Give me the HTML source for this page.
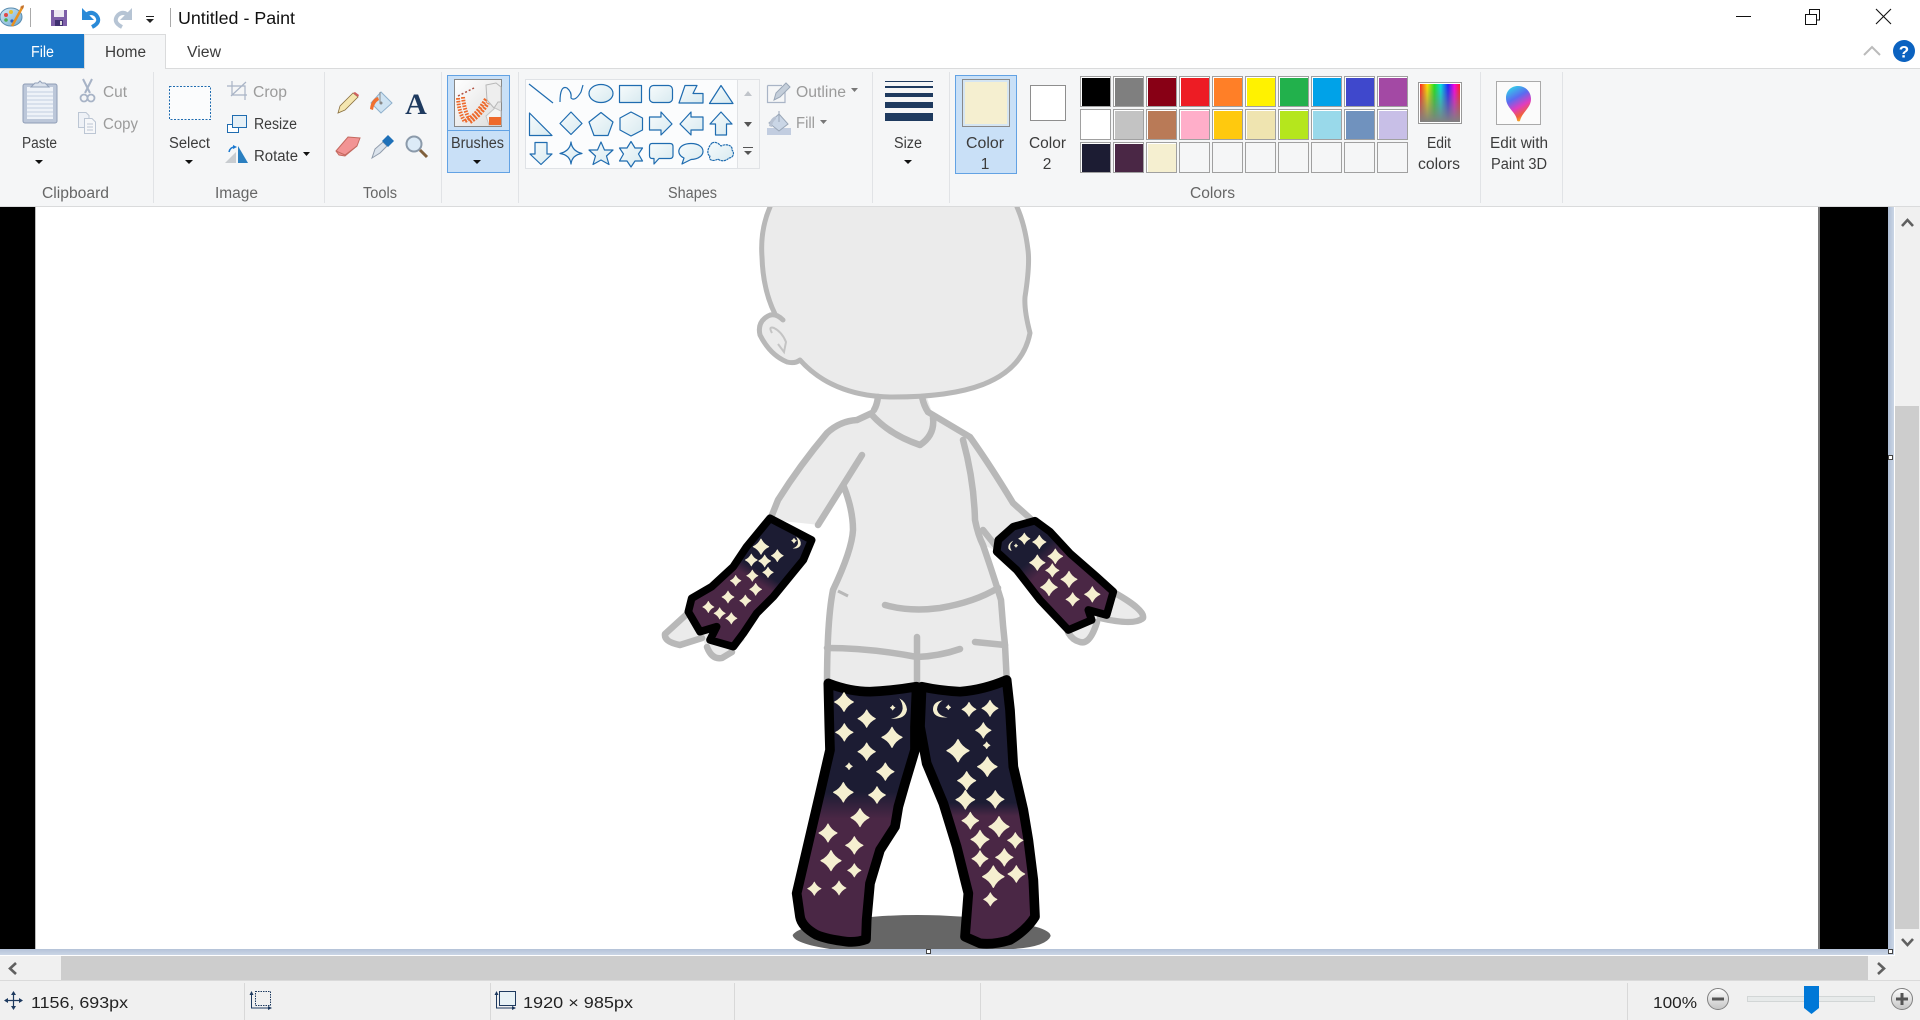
<!DOCTYPE html>
<html><head><meta charset="utf-8"><title>Untitled - Paint</title>
<style>
html,body{margin:0;padding:0;background:#fff;width:1920px;height:1020px;overflow:hidden}
svg{display:block}
text{font-family:"Liberation Sans",sans-serif;font-size:15.5px;fill:#3c3c3c}
.g{fill:#9b9b9b}.l{fill:#666}
</style></head><body>
<svg width="1920" height="1020" viewBox="0 0 1920 1020" xmlns="http://www.w3.org/2000/svg">
<defs>
<path id="s" d="M0-1Q.32-.32 1 0Q.32.32 0 1Q-.32.32-1 0Q-.32-.32 0-1Z" stroke="#f5efd0" stroke-width=".12" stroke-linejoin="round"/>
<linearGradient id="band" x1="0" y1="0" x2="0" y2="1"><stop offset="0" stop-color="#b4c2d8"/><stop offset="1" stop-color="#cbd6e6"/></linearGradient>
<linearGradient id="bandv" x1="0" y1="0" x2="1" y2="0"><stop offset="0" stop-color="#aebdd4"/><stop offset="1" stop-color="#cbd6e6"/></linearGradient>
<linearGradient id="sockL" gradientUnits="userSpaceOnUse" x1="0" y1="60" x2="0" y2="860"><stop offset="0" stop-color="#1c1c33"/><stop offset=".42" stop-color="#1c1c33"/><stop offset=".52" stop-color="#4a2745"/><stop offset="1" stop-color="#4a2745"/></linearGradient>
<linearGradient id="sockR" gradientUnits="userSpaceOnUse" x1="0" y1="60" x2="0" y2="860"><stop offset="0" stop-color="#1c1c33"/><stop offset=".46" stop-color="#1c1c33"/><stop offset=".51" stop-color="#4a2745"/><stop offset="1" stop-color="#4a2745"/></linearGradient>
<linearGradient id="gloveL" gradientUnits="userSpaceOnUse" x1="440" y1="130" x2="270" y2="410"><stop offset="0" stop-color="#1c1c33"/><stop offset=".42" stop-color="#1c1c33"/><stop offset=".52" stop-color="#4a2745"/><stop offset="1" stop-color="#4a2745"/></linearGradient>
<linearGradient id="gloveR" gradientUnits="userSpaceOnUse" x1="1110" y1="130" x2="1350" y2="390"><stop offset="0" stop-color="#1c1c33"/><stop offset=".28" stop-color="#1c1c33"/><stop offset=".42" stop-color="#4a2745"/><stop offset="1" stop-color="#4a2745"/></linearGradient>
<linearGradient id="sh" x1="0" y1="0" x2="1" y2="1"><stop offset="0" stop-color="#f7fbfc"/><stop offset="1" stop-color="#d8eaf0"/></linearGradient>
<linearGradient id="rb" x1="0" y1="0" x2="1" y2="0"><stop offset="0" stop-color="#ff2020"/><stop offset=".18" stop-color="#ffe000"/><stop offset=".36" stop-color="#20e020"/><stop offset=".52" stop-color="#00e0e0"/><stop offset=".7" stop-color="#2020ff"/><stop offset=".86" stop-color="#ff00e0"/><stop offset="1" stop-color="#ff2020"/></linearGradient>
<linearGradient id="rbv" x1="0" y1="0" x2="0" y2="1"><stop offset="0" stop-color="#808080" stop-opacity="0"/><stop offset="1" stop-color="#808080"/></linearGradient>
<linearGradient id="drop" x1=".2" y1="0" x2=".6" y2="1"><stop offset="0" stop-color="#2fd6e8"/><stop offset=".35" stop-color="#5a6cf0"/><stop offset=".62" stop-color="#e03cc0"/><stop offset=".85" stop-color="#f0603c"/><stop offset="1" stop-color="#f8c020"/></linearGradient>
<linearGradient id="btn" x1="0" y1="0" x2="0" y2="1"><stop offset="0" stop-color="#fff"/><stop offset="1" stop-color="#c4c4c4"/></linearGradient>
<linearGradient id="pal" x1="0" y1="0" x2="1" y2="1"><stop offset="0" stop-color="#d8ecf8"/><stop offset="1" stop-color="#6aa6cf"/></linearGradient>
<linearGradient id="bi" x1="0" y1="0" x2="1" y2="1"><stop offset="0" stop-color="#fff"/><stop offset="1" stop-color="#dcdcdc"/></linearGradient>
</defs>

<!-- workspace -->
<rect x="0" y="207" width="1920" height="813" fill="#f0f0f0"/>
<rect x="0" y="207" width="35" height="742" fill="#000"/>
<rect x="35" y="207" width="1" height="742" fill="#bbb"/>
<rect x="36" y="207" width="1782" height="742" fill="#fff"/>
<rect x="1818" y="207" width="2" height="742" fill="#777"/>
<rect x="1820" y="207" width="68" height="742" fill="#000"/>
<rect x="1888" y="207" width="6" height="748" fill="url(#bandv)"/>
<rect x="0" y="949" width="1894" height="6" fill="url(#band)"/>
<rect x="1894" y="207" width="1" height="749" fill="#fff"/>
<rect x="0" y="955" width="1895" height="1" fill="#fff"/>

<!-- figure shadow -->
<g transform="translate(780 660) scale(.33333)">
<path d="M285 770Q410 760 545 770Q810 790 812 828Q800 860 700 867L150 867Q40 850 38 825Q60 790 285 770Z" fill="#666"/>
</g>

<!-- hands -->
<path d="M688 613L665 634Q664 642 680 645L702 638Q712 660 722 658L745 640L700 600Z" fill="#ebebeb"/>
<path d="M1115 593Q1145 610 1143 618Q1135 626 1100 618Q1090 645 1080 642Q1072 640 1068 632L1090 590Z" fill="#ebebeb"/>
<!-- arms and torso -->
<path d="M872 413L857 420Q840 421 827 433Q800 465 778 500L772 520L820 525L843 487Q853 510 853 530Q852 550 833 590L827 625V692H1007L1005 645L1003 625L998 590L983 545L995 550L1032 520L1013 503Q990 465 970 437L928 412Z" fill="#ebebeb"/>
<!-- head -->
<path d="M770 207Q760 230 762 257Q763 290 775 314L768 316Q757 322 760 335Q770 355 787 362Q795 364 800 360C825 388 860 397 893 397C960 397 1020 385 1030 333Q1024 310 1025 297Q1030 265 1028 250Q1025 225 1017 207Z" fill="#ebebeb"/>
<path d="M875 395L872 418L920 447L934 418L926 395Z" fill="#ebebeb"/>
<g fill="none" stroke="#b8b8b8" stroke-width="5" stroke-linecap="round" stroke-linejoin="round">
<path d="M770 207Q760 230 762 257Q763 290 775 314M783 320Q775 312 768 316Q757 322 760 335Q770 355 787 362Q795 364 800 360C825 388 860 397 893 397C960 397 1020 385 1030 333Q1024 310 1025 297Q1030 265 1028 250Q1025 225 1017 207"/>
</g>
<g fill="none" stroke="#b8b8b8" stroke-width="6.5" stroke-linecap="round" stroke-linejoin="round">
<path d="M878 397Q877 405 874 410M922 397Q924 406 928 412"/>
<path d="M872 415Q890 435 920 445Q935 435 933 418"/>
<path d="M872 413L857 420Q840 421 827 433Q800 465 778 500L772 515"/>
<path d="M928 412Q950 425 970 437Q990 465 1013 503L1032 520"/>
<path d="M862 455L818 525"/>
<path d="M844 487Q853 510 853 530Q852 550 833 590Q827 620 827 685"/>
<path d="M963 440Q974 480 975 520Q978 535 983 545Q995 580 1001 600L1003 625L1005 645L1007 685"/>
<path d="M983 530L995 545"/>
<path d="M885 605Q910 612 940 608Q975 602 998 588"/>
<path d="M827 648Q870 648 917 657Q940 656 960 649"/>
<path d="M917 637L917 685"/>
<path d="M975 642L1005 645"/>
<path d="M688 613L665 634Q664 642 680 645L702 638"/>
<path d="M707 647Q712 660 722 658L732 652"/>
<path d="M1115 593Q1145 610 1143 618Q1135 626 1100 618"/>
<path d="M1097 622Q1090 645 1080 642Q1072 640 1068 632"/>
</g>
<path d="M838 591L848 596" stroke="#b8b8b8" stroke-width="3" fill="none"/>
<path d="M772 333Q768 326 774 328Q782 332 786 342L784 352L778 344" stroke="#c4c4c4" stroke-width="2" fill="none"/>

<!-- socks -->
<g transform="translate(780 660) scale(.33333)">
<path d="M145 70Q210 95 270 95Q340 92 410 80L405 200L405 270L375 370L355 440L345 500L300 570L270 670L260 780L258 838Q230 848 200 845Q140 838 110 825Q65 800 60 770L50 700L85 550L120 400L150 270L148 200Z" fill="url(#sockL)" stroke="#000" stroke-width="29" stroke-linejoin="round"/>
<path d="M425 80Q480 92 540 95Q610 90 680 60L690 150L700 320L730 450L745 540L760 660L765 770Q740 810 690 840Q640 855 600 850L555 830L565 700L530 560L490 430L440 310L420 200Z" fill="url(#sockR)" stroke="#000" stroke-width="29" stroke-linejoin="round"/>
<g fill="#f5efd0">
<use href="#s" transform="translate(192 126) scale(28)"/><use href="#s" transform="translate(260 176) scale(26)"/><use href="#s" transform="translate(193 217) scale(26)"/><use href="#s" transform="translate(336 232) scale(30)"/><use href="#s" transform="translate(260 275) scale(26)"/><use href="#s" transform="translate(207 319) scale(11)"/><use href="#s" transform="translate(316 335) scale(26)"/><use href="#s" transform="translate(190 397) scale(29)"/><use href="#s" transform="translate(291 405) scale(25)"/><use href="#s" transform="translate(240 473) scale(27)"/><use href="#s" transform="translate(144 519) scale(27)"/><use href="#s" transform="translate(223 556) scale(26)"/><use href="#s" transform="translate(153 602) scale(30)"/><use href="#s" transform="translate(223 631) scale(20)"/><use href="#s" transform="translate(103 686) scale(20)"/><use href="#s" transform="translate(177 684) scale(21)"/><use href="#s" transform="translate(338 143) scale(8)"/>
<use href="#s" transform="translate(567 148) scale(21)"/><use href="#s" transform="translate(630 145) scale(24)"/><use href="#s" transform="translate(610 211) scale(23)"/><use href="#s" transform="translate(620 256) scale(11)"/><use href="#s" transform="translate(534 272) scale(33)"/><use href="#s" transform="translate(622 320) scale(29)"/><use href="#s" transform="translate(560 362) scale(27)"/><use href="#s" transform="translate(556 419) scale(28)"/><use href="#s" transform="translate(646 418) scale(26)"/><use href="#s" transform="translate(571 482) scale(25)"/><use href="#s" transform="translate(657 500) scale(30)"/><use href="#s" transform="translate(600 538) scale(27)"/><use href="#s" transform="translate(706 541) scale(23)"/><use href="#s" transform="translate(600 596) scale(24)"/><use href="#s" transform="translate(673 592) scale(26)"/><use href="#s" transform="translate(640 650) scale(32)"/><use href="#s" transform="translate(709 642) scale(25)"/><use href="#s" transform="translate(631 718) scale(20)"/><use href="#s" transform="translate(505 142) scale(8)"/>
<path d="M358 115Q378 125 381 148Q378 178 333 176Q365 170 368 145Q368 128 358 115Z"/>
<path d="M488 121Q458 125 459 150Q462 175 503 172Q475 168 471 148Q472 130 488 121Z"/>
</g>
</g>

<!-- gloves -->
<g transform="translate(640 490) scale(.33333)">
<path d="M390 85L515 150L490 210L445 265L400 320L350 370L310 430L280 470L210 450L230 410L180 425L145 365L155 325L215 290L280 230L320 170Z" fill="url(#gloveL)" stroke="#000" stroke-width="23" stroke-linejoin="round"/>
<path d="M1185 92L1230 125L1290 190L1370 260L1420 305L1400 375L1345 360L1355 390L1285 420L1200 330L1130 240L1070 185L1075 150L1120 110Z" fill="url(#gloveR)" stroke="#000" stroke-width="23" stroke-linejoin="round"/>
<g fill="#f5efd0">
<use href="#s" transform="translate(363 170) scale(23)"/><use href="#s" transform="translate(412 197) scale(18)"/><use href="#s" transform="translate(334 210) scale(18)"/><use href="#s" transform="translate(374 213) scale(18)"/><use href="#s" transform="translate(384 247) scale(16)"/><use href="#s" transform="translate(337 257) scale(17)"/><use href="#s" transform="translate(287 272) scale(16)"/><use href="#s" transform="translate(347 298) scale(18)"/><use href="#s" transform="translate(264 321) scale(18)"/><use href="#s" transform="translate(316 332) scale(17)"/><use href="#s" transform="translate(205 351) scale(17)"/><use href="#s" transform="translate(239 370) scale(17)"/><use href="#s" transform="translate(274 385) scale(17)"/><use href="#s" transform="translate(462 152) scale(8)"/>
<use href="#s" transform="translate(1153 146) scale(17)"/><use href="#s" transform="translate(1198 156) scale(20)"/><use href="#s" transform="translate(1246 199) scale(22)"/><use href="#s" transform="translate(1192 218) scale(23)"/><use href="#s" transform="translate(1237 241) scale(20)"/><use href="#s" transform="translate(1287 268) scale(24)"/><use href="#s" transform="translate(1227 292) scale(25)"/><use href="#s" transform="translate(1357 313) scale(23)"/><use href="#s" transform="translate(1298 328) scale(20)"/><use href="#s" transform="translate(1128 167) scale(6)"/>
<path d="M468 140Q485 150 482 165Q475 178 458 175Q472 170 474 160Q474 150 468 140Z"/>
<path d="M1120 152Q1103 160 1105 175Q1110 183 1115 182Q1108 172 1112 162Z"/>
</g>
</g>

<!-- handles -->
<g fill="#fff" stroke="#444" stroke-width="1">
<rect x="1888.5" y="455.5" width="4" height="4"/><rect x="1888.5" y="949.5" width="4" height="4"/><rect x="926.5" y="949.5" width="4" height="4"/>
</g>

<!-- title bar / tabs / ribbon -->
<rect x="0" y="0" width="1920" height="207" fill="#fff"/>
<rect x="0" y="69" width="1920" height="137" fill="#f5f6f7"/>
<rect x="0" y="68" width="1920" height="1" fill="#dadbdc"/>
<rect x="0" y="206" width="1920" height="1" fill="#dadbdc"/>
<rect x="0" y="34" width="84" height="34" fill="#1979ca"/>
<path d="M84.5 69V34.5H165.5V69" fill="#f5f6f7" stroke="#dadbdc"/>

<text x="31" y="57" style="fill:#fff" textLength="23" lengthAdjust="spacingAndGlyphs">File</text>
<text x="105" y="57" textLength="41" lengthAdjust="spacingAndGlyphs">Home</text>
<text x="187" y="57" textLength="34" lengthAdjust="spacingAndGlyphs">View</text>
<text x="178" y="24" style="font-size:17.5px;fill:#111" textLength="117" lengthAdjust="spacingAndGlyphs">Untitled - Paint</text>

<!-- app icon -->
<ellipse cx="11" cy="17" rx="11" ry="9" fill="url(#pal)" stroke="#5b8db0"/>
<circle cx="6" cy="15" r="2" fill="#e04848"/><circle cx="11" cy="12" r="2" fill="#e8c030"/><circle cx="6" cy="20" r="1.8" fill="#50b050"/><circle cx="12" cy="21" r="1.6" fill="#3060c0"/>
<path d="M23 6L12 26" stroke="#e89020" stroke-width="2.5"/><path d="M20 7L24 5L23 9Z" fill="#c07030"/>
<rect x="30" y="8" width="1" height="19" fill="#aaa"/><rect x="170" y="8" width="1" height="19" fill="#aaa"/>
<!-- save -->
<path d="M51 10H67V26H51Z" fill="#7d5fa8"/><rect x="54" y="10" width="10" height="7" fill="#ece8f2"/><rect x="55" y="20" width="8" height="6" fill="#3f3070"/><rect x="60" y="21" width="2" height="4" fill="#ddd"/>
<!-- undo redo -->
<path d="M84 17Q90 10 96 15Q102 22 92 27" fill="none" stroke="#2a8ad8" stroke-width="4"/><path d="M82 8L82 20L94 20Z" fill="#2a8ad8"/>
<path d="M130 17Q124 10 118 15Q112 22 122 27" fill="none" stroke="#b6c4d4" stroke-width="4"/><path d="M132 8L132 20L120 20Z" fill="#b6c4d4"/>
<rect x="146" y="16" width="8" height="1" fill="#222"/><path d="M146 19H154L150 23Z" fill="#222"/>

<!-- window controls -->
<rect x="1736" y="16" width="15" height="1" fill="#111"/>
<path d="M1805.5 14.5H1816.5V24.5H1805.5ZM1809.5 14V9.5H1819.5V20H1817" fill="none" stroke="#111"/>
<path d="M1876 9L1891 24M1891 9L1876 24" stroke="#111" stroke-width="1.1"/>
<path d="M1864 55L1872 47L1880 55" fill="none" stroke="#bbb" stroke-width="2"/>
<circle cx="1904" cy="51" r="11" fill="#0b62c0"/>
<text x="1904" y="57.5" text-anchor="middle" style="font-size:17px;fill:#fff;font-weight:bold">?</text>

<!-- separators -->
<g fill="#e1e3e6">
<rect x="153" y="72" width="1" height="131"/><rect x="324" y="72" width="1" height="131"/><rect x="441" y="72" width="1" height="131"/><rect x="518" y="72" width="1" height="131"/><rect x="872" y="72" width="1" height="131"/><rect x="949" y="72" width="1" height="131"/><rect x="1480" y="72" width="1" height="131"/><rect x="1562" y="72" width="1" height="131"/>
</g>

<!-- clipboard -->
<rect x="23" y="84" width="34" height="39" rx="2" fill="#bcc7d9" stroke="#8f9db6"/>
<rect x="27" y="87" width="26" height="32" fill="#eef2f8"/>
<path d="M27 92H53M27 96H53M27 100H53M27 104H53M27 108H53M27 112H53M27 116H53" stroke="#c2cde0"/>
<path d="M31 87L35 83H38L40 81L42 83H45L49 87Z" fill="#dbe2ec" stroke="#93a2ba"/>
<path d="M83 79L90 93M92 79L85 93" stroke="#a7b3c6" stroke-width="2"/>
<circle cx="84" cy="98" r="3.5" fill="none" stroke="#a7b3c6" stroke-width="1.8"/><circle cx="91" cy="98" r="3.5" fill="none" stroke="#a7b3c6" stroke-width="1.8"/>
<path d="M78.5 112.5H86L89 115.5V127.5H78.5Z" fill="#eef1f6" stroke="#bcc6d4"/>
<path d="M84.5 118.5H92L95.5 122V133.5H84.5Z" fill="#f6f7f9" stroke="#bcc6d4"/><path d="M87 124H93M87 127H93M87 130H93" stroke="#bcc6d4"/>
<text x="22" y="148" textLength="35" lengthAdjust="spacingAndGlyphs">Paste</text>
<path d="M35 160H43L39 164Z" fill="#111"/>
<text class="g" x="103" y="97" textLength="24" lengthAdjust="spacingAndGlyphs">Cut</text>
<text class="g" x="103" y="129" textLength="35" lengthAdjust="spacingAndGlyphs">Copy</text>
<text class="l" x="42" y="198" textLength="67" lengthAdjust="spacingAndGlyphs">Clipboard</text>

<!-- image -->
<rect x="169.5" y="86.5" width="41" height="33" fill="#fbfcfd" stroke="#1f6cb0" stroke-dasharray="2 1.5"/>
<text x="169" y="148" textLength="41" lengthAdjust="spacingAndGlyphs">Select</text>
<path d="M185 160H193L189 164Z" fill="#111"/>
<path d="M227 86H245V100M232 81V95H247M231 96L246 82" fill="none" stroke="#a9b4c6" stroke-width="1.2"/>
<text class="g" x="253" y="97" textLength="34" lengthAdjust="spacingAndGlyphs">Crop</text>
<rect x="227.5" y="124.5" width="11" height="8" fill="#fff" stroke="#1f6cb0"/>
<rect x="232.5" y="115.5" width="14" height="12" fill="#e6f0f6" stroke="#1f6cb0"/>
<text x="254" y="129" textLength="43" lengthAdjust="spacingAndGlyphs">Resize</text>
<path d="M225 163L236 152V163Z" fill="#c8ccd0"/><path d="M238 146L248 163H238Z" fill="#2a7fc0"/>
<path d="M229 152Q230 147 235 147" fill="none" stroke="#1a78d0" stroke-width="1.5"/><path d="M233 145L237 147L233 149Z" fill="#1a78d0"/>
<text x="254" y="161" textLength="44" lengthAdjust="spacingAndGlyphs">Rotate</text>
<path d="M303 152H310L306.5 156Z" fill="#111"/>
<text class="l" x="215" y="198" textLength="43" lengthAdjust="spacingAndGlyphs">Image</text>

<!-- tools -->
<path d="M338 113L340 106L353 93L358 97L345 110Z" fill="#f4e6b0" stroke="#8a7040" stroke-width=".8"/><path d="M353 93L355 92L359 95L358 97Z" fill="#d06060"/>
<path d="M381 92L392 103L381 113L371 103Z" fill="#cfe3f2" stroke="#8fb0cc"/><path d="M380 103V92" stroke="#888"/><circle cx="381" cy="103" r="1.5" fill="#888"/>
<path d="M370 109Q371 99 378 97L379 100Q374 103 373 110Z" fill="#f07030"/>
<text x="416" y="114" text-anchor="middle" style="font-family:'Liberation Serif',serif;font-size:30px;font-weight:bold;fill:#1e3a5f">A</text>
<path d="M336 151L348 137L360 138L357 146L345 156L339 155Z" fill="#f29494" stroke="#c46a60"/><path d="M336 151L345 155L357 146" fill="none" stroke="#c46a60"/>
<path d="M372 158L375 149L383 142L387 146L380 153Z" fill="#dbe3ec" stroke="#909cac"/><path d="M382 141L388 135L394 141L388 147Z" fill="#1e70b8"/>
<circle cx="414" cy="144" r="7.5" fill="#dcebf7" stroke="#8b9aaa" stroke-width="2"/><path d="M420 150L427 157" stroke="#80603c" stroke-width="3"/>
<text class="l" x="363" y="198" textLength="34" lengthAdjust="spacingAndGlyphs">Tools</text>

<!-- brushes -->
<rect x="447.5" y="75.5" width="62" height="97" fill="#c9e0f7" stroke="#62a2e4"/>
<path d="M448 130.5H509" stroke="#62a2e4"/>
<rect x="454.5" y="79.5" width="47" height="47" fill="url(#bi)" stroke="#888"/>
<path d="M458 98Q459 113 465 122M463 97Q464 109 469 119" fill="none" stroke="#ee6a2c" stroke-width="4" stroke-dasharray="1.6 1.2"/>
<path d="M465 121Q476 116 486 99M470 122Q480 116 488 103" fill="none" stroke="#ee6a2c" stroke-width="4" stroke-dasharray="2 1.2"/>
<path d="M458 96L474 88" fill="none" stroke="#b05040" stroke-width="1.5" stroke-dasharray="2 2"/>
<path d="M486 85L496 83L501 87V102H498L494 108L487 100Z" fill="#eeeeee" stroke="#b8b8b8"/>
<path d="M486 116L495 108L501 111V125H489Z" fill="#f4f4f4" stroke="#c4c4c4"/>
<rect x="489" y="117" width="12" height="8" fill="#ee6a2c"/>
<text x="451" y="148" textLength="53" lengthAdjust="spacingAndGlyphs">Brushes</text>
<path d="M473 160H481L477 164Z" fill="#111"/>

<!-- shapes gallery -->
<rect x="525.5" y="79.5" width="212" height="89" fill="#fbfcfd" stroke="#dfe2e6"/>
<rect x="737.5" y="79.5" width="22" height="89" fill="#f5f6f7" stroke="#e0e2e5"/>
<path d="M744 96L748 91L752 96Z" fill="#c0c4ca"/><path d="M744 122H752L748 127Z" fill="#555"/>
<path d="M743 147H753V148H743ZM744 151H752L748 155Z" fill="#555"/>
<g fill="url(#sh)" stroke="#1f6cb0" stroke-width="1.2" stroke-linejoin="round">
<path d="M529 84L553 103" fill="none"/>
<path d="M560 102Q560 85 567 88Q572 92 571 98Q575 102 581 92L583 85" fill="none"/>
<ellipse cx="601" cy="93.5" rx="12" ry="9"/>
<rect x="619.5" y="85.5" width="22" height="17"/>
<rect x="649.5" y="85.5" width="23" height="17" rx="4"/>
<path d="M685 85.5H697L693 93.5H703V103H679Z"/>
<path d="M721 85.5L733 103.5H709.5Z"/>
<path d="M529.5 113L552 135.5H529.5Z"/>
<path d="M571 112L582 123.5L571 134.5L560 123.5Z"/>
<path d="M601 112.5L613 122L608 135.5H594L589 122Z"/>
<path d="M631 112L642.5 118V130L631 136L620 130V118Z"/>
<path d="M649.5 117H661V112L672 124L661 135V130H649.5Z"/>
<path d="M703 117H691V112L680 124L691 135V130H703Z"/>
<path d="M721 112L732 124H726.5V135H715.5V124H710Z"/>
<path d="M535 142.5H547V154H552L541 164.5L530 154H535Z"/>
<path d="M571 142Q572 151 582 153.5Q572 155 571 164Q570 155 560 153.5Q570 151 571 142Z"/>
<path d="M601 142L604.5 150H613L606.5 156L609 164.5L601 160L593 164.5L595.5 156L589 150H597.5Z"/>
<path d="M631 141.5L635 148H642.5L638.5 154L642.5 161H635L631 167L627 161H619.5L623.5 154L619.5 148H627Z"/>
<path d="M652 143.5H670Q673 143.5 673 146.5V155.5Q673 158.5 670 158.5H659L654 164V158.5H652Q649.5 158.5 649.5 155.5V146.5Q649.5 143.5 652 143.5Z"/>
<path d="M691 143.5C707 143.5 707 159 691 159.5L682 164L684 158C675 154 678 143.5 691 143.5Z"/>
<path d="M712 143C716 141 719 144 721 146C727 143 733 146 732 150C735 153 733 158 729 158C725 162 720 161 718 159C713 162 708 160 710 156C706 154 708 147 712 143Z" stroke-dasharray="2.4 .6"/>
</g>
<text class="l" x="668" y="198" textLength="49" lengthAdjust="spacingAndGlyphs">Shapes</text>

<!-- outline / fill -->
<path d="M767.5 85.5H782M767.5 85.5V102.5H785V92" fill="none" stroke="#a9b4c6" stroke-width="1.2"/>
<path d="M774 100L776 93L786 83L790 87L780 97Z" fill="#c4ceda" stroke="#9aa7b8"/>
<text class="g" x="796" y="97" textLength="50" lengthAdjust="spacingAndGlyphs">Outline</text>
<path d="M851 88H858L854.5 92Z" fill="#777"/>
<rect x="767" y="128" width="24" height="7" fill="#c2cde0"/>
<path d="M779 114L788 124L779 131L769 123Z" fill="#cad6e6" stroke="#9aa7b8"/><path d="M779 111V122" stroke="#9aa7b8"/>
<path d="M769 126Q770 118 776 116V119Q772 122 772 127Z" fill="#b8c2d2"/>
<text class="g" x="796" y="128" textLength="19" lengthAdjust="spacingAndGlyphs">Fill</text>
<path d="M820 120H827L823.5 124Z" fill="#777"/>

<!-- size -->
<g fill="#1e3a5f">
<rect x="885" y="81" width="48" height="1"/><rect x="885" y="86" width="48" height="2"/><rect x="885" y="93" width="48" height="4"/><rect x="885" y="102" width="48" height="6"/><rect x="885" y="113" width="48" height="8"/>
</g>
<text x="894" y="148" textLength="28" lengthAdjust="spacingAndGlyphs">Size</text>
<path d="M904 160H912L908 164Z" fill="#111"/>

<!-- colors -->
<rect x="955.5" y="75.5" width="61" height="98" fill="#c9e0f7" stroke="#62a2e4"/>
<rect x="962.5" y="79.5" width="47" height="47" fill="#d5e5f2" stroke="#8a8a8a"/>
<rect x="965" y="82" width="42" height="42" fill="#f5efd0"/>
<text x="966" y="148" textLength="38" lengthAdjust="spacingAndGlyphs">Color</text>
<text x="985" y="169" text-anchor="middle">1</text>
<rect x="1030.5" y="85.5" width="35" height="35" fill="#fff" stroke="#8e8e8e"/>
<text x="1029" y="148" textLength="37" lengthAdjust="spacingAndGlyphs">Color</text>
<text x="1047" y="169" text-anchor="middle">2</text>
<g stroke="#a0a0a0" fill="#fff">
<rect x="1080.5" y="76.5" width="30" height="30"/><rect x="1113.5" y="76.5" width="30" height="30"/><rect x="1146.5" y="76.5" width="30" height="30"/><rect x="1179.5" y="76.5" width="30" height="30"/><rect x="1212.5" y="76.5" width="30" height="30"/><rect x="1245.5" y="76.5" width="30" height="30"/><rect x="1278.5" y="76.5" width="30" height="30"/><rect x="1311.5" y="76.5" width="30" height="30"/><rect x="1344.5" y="76.5" width="30" height="30"/><rect x="1377.5" y="76.5" width="30" height="30"/>
<rect x="1080.5" y="109.5" width="30" height="30"/><rect x="1113.5" y="109.5" width="30" height="30"/><rect x="1146.5" y="109.5" width="30" height="30"/><rect x="1179.5" y="109.5" width="30" height="30"/><rect x="1212.5" y="109.5" width="30" height="30"/><rect x="1245.5" y="109.5" width="30" height="30"/><rect x="1278.5" y="109.5" width="30" height="30"/><rect x="1311.5" y="109.5" width="30" height="30"/><rect x="1344.5" y="109.5" width="30" height="30"/><rect x="1377.5" y="109.5" width="30" height="30"/>
<rect x="1080.5" y="142.5" width="30" height="30"/><rect x="1113.5" y="142.5" width="30" height="30"/><rect x="1146.5" y="142.5" width="30" height="30"/>
</g>
<g stroke="#a0a0a0" fill="#f5f6f7">
<rect x="1179.5" y="142.5" width="30" height="30"/><rect x="1212.5" y="142.5" width="30" height="30"/><rect x="1245.5" y="142.5" width="30" height="30"/><rect x="1278.5" y="142.5" width="30" height="30"/><rect x="1311.5" y="142.5" width="30" height="30"/><rect x="1344.5" y="142.5" width="30" height="30"/><rect x="1377.5" y="142.5" width="30" height="30"/>
</g>
<rect x="1082" y="78" width="28" height="28" fill="#000"/><rect x="1115" y="78" width="28" height="28" fill="#7f7f7f"/><rect x="1148" y="78" width="28" height="28" fill="#880015"/><rect x="1181" y="78" width="28" height="28" fill="#ed1c24"/><rect x="1214" y="78" width="28" height="28" fill="#ff7f27"/><rect x="1247" y="78" width="28" height="28" fill="#fff200"/><rect x="1280" y="78" width="28" height="28" fill="#22b14c"/><rect x="1313" y="78" width="28" height="28" fill="#00a2e8"/><rect x="1346" y="78" width="28" height="28" fill="#3f48cc"/><rect x="1379" y="78" width="28" height="28" fill="#a349a4"/>
<rect x="1082" y="111" width="28" height="28" fill="#fff"/><rect x="1115" y="111" width="28" height="28" fill="#c3c3c3"/><rect x="1148" y="111" width="28" height="28" fill="#b97a57"/><rect x="1181" y="111" width="28" height="28" fill="#ffaec9"/><rect x="1214" y="111" width="28" height="28" fill="#ffc90e"/><rect x="1247" y="111" width="28" height="28" fill="#efe4b0"/><rect x="1280" y="111" width="28" height="28" fill="#b5e61d"/><rect x="1313" y="111" width="28" height="28" fill="#99d9ea"/><rect x="1346" y="111" width="28" height="28" fill="#7092be"/><rect x="1379" y="111" width="28" height="28" fill="#c8bfe7"/>
<rect x="1082" y="144" width="28" height="28" fill="#1c1c33"/><rect x="1115" y="144" width="28" height="28" fill="#4a2745"/><rect x="1148" y="144" width="28" height="28" fill="#f5efd0"/>
<text class="l" x="1190" y="198" textLength="45" lengthAdjust="spacingAndGlyphs">Colors</text>

<rect x="1418.5" y="82.5" width="43" height="41" fill="#fff" stroke="#999"/>
<rect x="1420" y="84" width="40" height="38" fill="url(#rb)"/><rect x="1420" y="84" width="40" height="38" fill="url(#rbv)"/>
<text x="1427" y="148" textLength="24" lengthAdjust="spacingAndGlyphs">Edit</text>
<text x="1418" y="169" textLength="42" lengthAdjust="spacingAndGlyphs">colors</text>

<rect x="1496.5" y="81.5" width="44" height="43" fill="#fbfbfb" stroke="#aaa"/>
<path d="M1518 86C1526 86 1531 92 1531 99C1531 108 1522 112 1520 121C1518 122 1517 121 1517 120C1516 112 1506 108 1506 98C1506 91 1511 86 1518 86Z" fill="url(#drop)"/>
<text x="1490" y="148" textLength="58" lengthAdjust="spacingAndGlyphs">Edit with</text>
<text x="1491" y="169" textLength="56" lengthAdjust="spacingAndGlyphs">Paint 3D</text>

<!-- scrollbars -->
<rect x="1895" y="207" width="25" height="749" fill="#f0f0f0"/>
<rect x="1895" y="406" width="24" height="523" fill="#cdcdcd"/>
<path d="M1902 226L1907.5 220L1913 226" fill="none" stroke="#606060" stroke-width="2.6"/>
<path d="M1902 939L1907.5 945L1913 939" fill="none" stroke="#606060" stroke-width="2.6"/>
<rect x="0" y="956" width="1920" height="24" fill="#f0f0f0"/>
<rect x="61" y="956" width="1807" height="24" fill="#cdcdcd"/>
<path d="M16 963L10 968.5L16 974" fill="none" stroke="#606060" stroke-width="2.6"/>
<path d="M1878 963L1884 968.5L1878 974" fill="none" stroke="#606060" stroke-width="2.6"/>

<!-- status -->
<rect x="0" y="980" width="1920" height="1" fill="#dadada"/>
<rect x="0" y="981" width="1920" height="39" fill="#f0f0f0"/>
<g fill="#d8d8d8"><rect x="244" y="983" width="1" height="37"/><rect x="490" y="983" width="1" height="37"/><rect x="734" y="983" width="1" height="37"/><rect x="980" y="983" width="1" height="37"/><rect x="1627" y="983" width="1" height="37"/></g>
<path d="M13.5 992V1009M5 1000.5H22" stroke="#1e3a5f" stroke-width="1.2"/>
<path d="M11 995L13.5 991L16 995ZM11 1006L13.5 1010L16 1006ZM8 998L4 1000.5L8 1003ZM19 998L23 1000.5L19 1003Z" fill="#1e3a5f"/>
<text x="31" y="1008" style="font-size:16px;fill:#222" textLength="97" lengthAdjust="spacingAndGlyphs">1156, 693px</text>
<rect x="255.5" y="991.5" width="15" height="14" fill="none" stroke="#1e3a5f" stroke-dasharray="1.5 1"/>
<path d="M251.5 993V1008H270" fill="none" stroke="#1e3a5f"/><path d="M249.5 995L251.5 991L253.5 995ZM268 1006L272 1008L268 1010Z" fill="#1e3a5f"/>
<rect x="499.5" y="991.5" width="16" height="14" fill="#e8f2f6" stroke="#1e3a5f"/>
<path d="M496.5 993V1008H514" fill="none" stroke="#1e3a5f"/><path d="M494.5 995L496.5 991L498.5 995ZM512 1006L516 1008L512 1010Z" fill="#1e3a5f"/>
<text x="523" y="1008" style="font-size:16px;fill:#222" textLength="110" lengthAdjust="spacingAndGlyphs">1920 × 985px</text>
<text x="1653" y="1008" style="font-size:16px;fill:#222" textLength="44" lengthAdjust="spacingAndGlyphs">100%</text>
<circle cx="1718" cy="999" r="10.5" fill="url(#btn)" stroke="#808080"/><rect x="1712" y="997.5" width="12" height="3" fill="#555"/>
<rect x="1747.5" y="996.5" width="127" height="5" fill="#e7eaea" stroke="#d2d6d6"/>
<path d="M1804 986H1819V1008L1811.5 1014L1804 1008Z" fill="#0078d7"/>
<circle cx="1902" cy="999" r="10.5" fill="url(#btn)" stroke="#808080"/><path d="M1896 997.5H1900.5V993H1903.5V997.5H1908V1000.5H1903.5V1005H1900.5V1000.5H1896Z" fill="#555"/>
</svg>
</body></html>
